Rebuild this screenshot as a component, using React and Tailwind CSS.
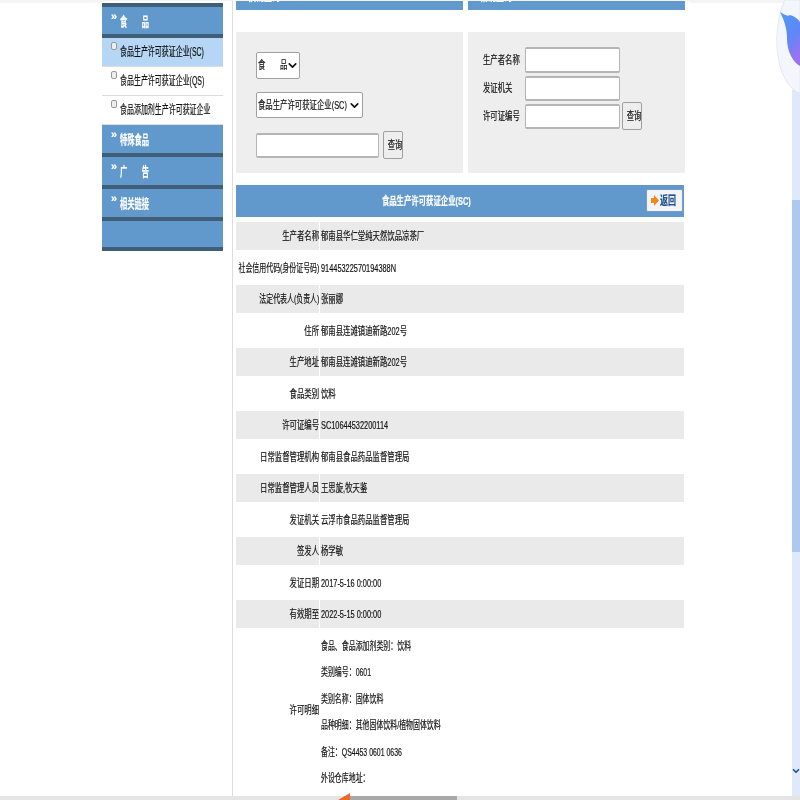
import React from 'react';
import { ChevronDown } from 'lucide-react';

const navItems = [
    { label: '食品生产许可获证企业(SC)', active: true },
    { label: '食品生产许可获证企业(QS)' },
    { label: '食品添加剂生产许可获证企业' },
];

const rows = [
    ['生产者名称', '郁南县华仁堂纯天然饮品凉茶厂'],
    ['社会信用代码(身份证号码)', '91445322570194388N'],
    ['法定代表人(负责人)', '张丽娜'],
    ['住所', '郁南县连滩镇迪新路202号'],
    ['生产地址', '郁南县连滩镇迪新路202号'],
    ['食品类别', '饮料'],
    ['许可证编号', 'SC10644532200114'],
    ['日常监督管理机构', '郁南县食品药品监督管理局'],
    ['日常监督管理人员', '王思旋,牧天鉴'],
    ['发证机关', '云浮市食品药品监督管理局'],
    ['签发人', '杨学敏'],
    ['发证日期', '2017-5-16 0:00:00'],
    ['有效期至', '2022-5-15 0:00:00'],
];

const details = [
    '食品、食品添加剂类别：饮料',
    '类别编号：0601',
    '类别名称：固体饮料',
    '品种明细：其他固体饮料/植物固体饮料',
    '备注：QS4453 0601 0636',
    '外设仓库地址：',
];

// the whole screenshot is squeezed sideways, so text gets narrowed
const Narrow = ({ children, className = 'origin-left', scale = 'scale-x-[0.67]' }) => (
    <span className={`inline-block whitespace-nowrap ${scale} ${className}`}>{children}</span>
);

const NavHeader = ({ children, showArrow = true, className = 'h-[32px]' }) => (
    <div className={`relative flex items-center pl-[18px] pt-[2px] bg-[#6199cc] border-b-[4px] border-[#3f5f78] text-white text-[13px] font-bold ${className}`}>
        {showArrow && <span className="absolute left-[9px] top-[1px] text-[11px]">»</span>}
        <span className="inline-block whitespace-nowrap scale-x-[0.56] origin-left">{children}</span>
    </div>
);

const TextBox = ({ className }) => (
    <input className={`bg-white border border-[#b5b5b5] border-t-2 border-b-2 rounded-[2px] ${className}`} />
);

const QueryButton = ({ className }) => (
    <button className={`bg-[#eee] border border-[#a0a0a0] rounded-[2px] text-[11px] text-[#111] overflow-hidden ${className}`}>
        <Narrow className="origin-center">查询</Narrow>
    </button>
);

const SelectBox = ({ children, className }) => (
    <div className={`flex items-center bg-white border border-[#a0a0a0] rounded-[2px] text-[11px] text-[#111] ${className}`}>
        <div className="flex-1 min-w-0">
            <Narrow>{children}</Narrow>
        </div>
        <ChevronDown size={13} strokeWidth={3} className="shrink-0 text-[#111]" />
    </div>
);

const Field = ({ label, inputClass, button }) => (
    <div className="flex items-center h-[28px]">
        <span className="w-[42px] text-[11px] text-[#111]"><Narrow>{label}</Narrow></span>
        <TextBox className={`w-[95px] ${inputClass}`} />
        {button && <QueryButton className="ml-[2px] w-[20px] h-[28px]" />}
    </div>
);

const App = () => {
    return (
        <div className='relative w-[800px] h-[800px] overflow-hidden bg-white blur-[0.5px] [-webkit-text-stroke:0.2px] font-["Liberation_Sans","Noto_Sans_CJK_SC",sans-serif]'>
            <div className="flex h-[797px]">
                {/* left nav */}
                <div className="w-[102px] shrink-0" />
                <div className="w-[121px] shrink-0 pt-[3px]">
                    <NavHeader className="h-[35px] border-t-[4px]">食　　品</NavHeader>
                    {navItems.map((item) => (
                        <div
                            key={item.label}
                            className={`h-[29px] flex items-center pl-[18px] relative border-b border-[#ddd] text-[12px] text-[#111] ${item.active ? 'bg-[#b5d6f5]' : 'bg-white'}`}
                        >
                            <span className="absolute left-[9px] top-[4px] w-[6px] h-[8px] border border-[#999] rounded-[2px] bg-[#eee]" />
                            <span className="inline-block whitespace-nowrap scale-x-[0.58] origin-left">{item.label}</span>
                        </div>
                    ))}
                    <NavHeader>特殊食品</NavHeader>
                    <NavHeader>广　　告</NavHeader>
                    <NavHeader>相关链接</NavHeader>
                    <NavHeader showArrow={false} className="h-[30px]" />
                </div>

                {/* main */}
                <div className="w-[9px] shrink-0" />
                <div className="w-[456px] shrink-0 pl-[3px] border-l border-[#ddd]">
                    <div className="flex gap-[5px]">
                        <div className="w-[227px]">
                            <div className="h-[10px] bg-[#6199cc] overflow-hidden pl-[12px] text-white text-[12px] font-bold leading-[12px]">
                                <span className="block -mt-[9px]"><Narrow>模糊查询</Narrow></span>
                            </div>
                            <div className="mt-[22px] h-[141px] bg-[#eee] pl-[20px] pt-[20px] flex flex-col items-start">
                                <SelectBox className="w-[44px] h-[27px] pl-[1px]">食　　品</SelectBox>
                                <SelectBox className="mt-[13px] w-[107px] h-[26px] pl-[1px] pr-[1px]">食品生产许可获证企业(SC)</SelectBox>
                                <div className="mt-[13px] flex items-center">
                                    <TextBox className="w-[123px] h-[25px]" />
                                    <QueryButton className="ml-[4px] w-[20px] h-[28px]" />
                                </div>
                            </div>
                        </div>
                        <div className="w-[217px]">
                            <div className="h-[10px] bg-[#6199cc] overflow-hidden pl-[12px] text-white text-[12px] font-bold leading-[12px]">
                                <span className="block -mt-[9px]"><Narrow>精确查询</Narrow></span>
                            </div>
                            <div className="mt-[22px] h-[141px] bg-[#eee] pl-[15px] pt-[14px]">
                                <Field label="生产者名称" inputClass="h-[26px]" />
                                <Field label="发证机关" inputClass="h-[25px]" />
                                <Field label="许可证编号" inputClass="h-[25px]" button />
                            </div>
                        </div>
                    </div>

                    <div className="relative mt-[12px] h-[32px] w-[448px] bg-[#6199cc] flex items-center justify-center pr-[68px] text-white text-[11px] font-bold">
                        <Narrow className="origin-center">食品生产许可获证企业(SC)</Narrow>
                        <div className="absolute right-[1px] top-[4px] h-[23px] w-[37px] bg-[#f2f4f8] border border-[#7a9cc0] rounded-[2px] flex items-center pl-[4px] gap-[1px] text-[#1f4f8f] text-[12px]">
                            <svg width="8" height="11" viewBox="0 0 8 11" className="shrink-0"><path d="M0 3h3V0l5 5.5L3 11V8H0z" fill="#f08a12" /></svg>
                            <Narrow>返回</Narrow>
                        </div>
                    </div>

                    <div className="mt-[5px] w-[448px] text-[11px] text-[#111]">
                        {rows.map(([label, value], i) => (
                            <div key={label} className={`flex items-center ${i % 2 === 0 ? 'h-[28px] bg-[#eaeaea]' : 'h-[35px]'}`}>
                                <div className="w-[83px] shrink-0 flex justify-end pt-[1px]">
                                    <Narrow className="origin-right" scale={label.includes('(') ? 'scale-x-[0.63]' : 'scale-x-[0.67]'}>{label}</Narrow>
                                </div>
                                <div className="pl-[1px] pt-[1px] border-l border-white h-full flex items-center"><Narrow>{value}</Narrow></div>
                            </div>
                        ))}
                        <div className="flex items-center h-[165px]">
                            <div className="w-[83px] shrink-0 flex justify-end"><Narrow className="origin-right">许可明细</Narrow></div>
                            <div className="pl-[2px] flex flex-col gap-[11.4px] pt-[4px]">
                                {details.map((d) => (
                                    <div key={d} className="leading-[15px]"><Narrow scale="scale-x-[0.63]">{d}</Narrow></div>
                                ))}
                            </div>
                        </div>
                    </div>
                </div>
                <div className="flex-1" />
            </div>

            {/* browser edges */}
            <div className="absolute left-0 right-0 top-0 h-[1px] bg-[#f4f4f4]" />
            <div className="absolute left-[690px] right-0 top-0 h-[3px] bg-[#f4f4f4]" />
            <div className="absolute left-0 w-[102px] top-0 h-[3px] bg-[#f4f4f4]" />
            <div className="absolute left-0 right-0 bottom-0 h-[4px] bg-[#e4e4e4]" />
            <div className="absolute left-[350px] bottom-0 w-[107px] h-[4px] bg-[#a8a8a8]" />
            <div className="absolute left-[338px] bottom-0 w-[12px] h-[7px] bg-[#f0672a] [clip-path:polygon(0_100%,100%_0,100%_100%)]" />

            {/* side widget */}
            <div className="absolute right-0 top-[90px] bottom-[4px] w-[8px] bg-[#dfe9f9]" />
            <div className="absolute right-0 top-[200px] h-[352px] w-[8px] bg-[#aec9ec]" />
            <svg className="absolute right-0 top-0" width="24" height="96" viewBox="0 0 24 96">
                <defs>
                    <linearGradient id="bird" x1="0" y1="0" x2="0.4" y2="1">
                        <stop offset="0" stopColor="#4f9cf5" />
                        <stop offset="0.6" stopColor="#5f86f7" />
                        <stop offset="1" stopColor="#9a74f0" />
                    </linearGradient>
                </defs>
                <path d="M24 0 L9 0 C3 12 0 30 1 46 C2 70 12 90 24 93z" fill="#f3f6fd" stroke="#e4e8f0" />
                <path d="M4 12 C8 14 11 17 14 15 C18 16 21 18 24 22 L24 66 C17 62 11 52 11 38 C11 28 8 20 4 12z" fill="url(#bird)" />
            </svg>
            <ChevronDown size={10} strokeWidth={4} className="absolute left-[791px] top-[766px] text-[#1f4f9f]" />
        </div>
    );
};

export default App;
